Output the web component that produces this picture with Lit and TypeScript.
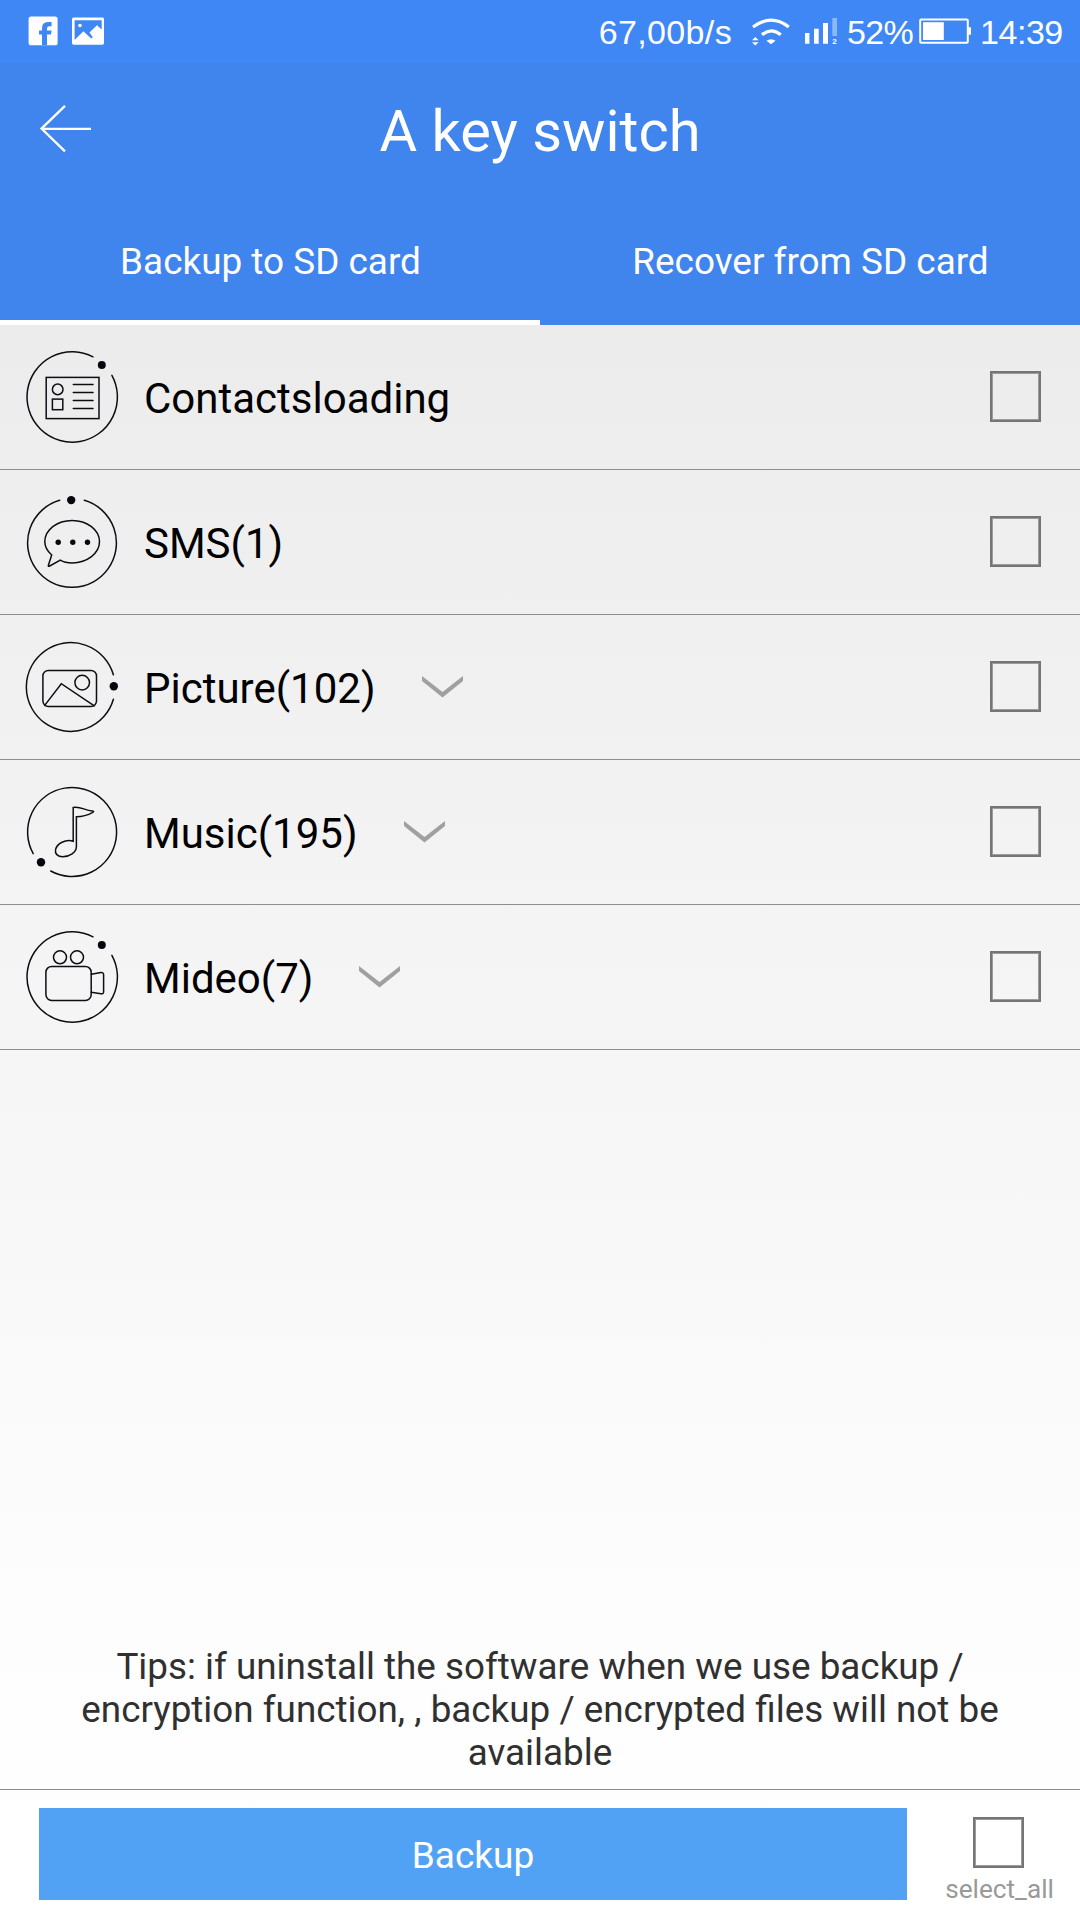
import { LitElement, html, svg, css, nothing, type SVGTemplateResult } from "lit";
import { customElement, property, state } from "lit/decorators.js";
import { classMap } from "lit/directives/class-map.js";

interface Category {
  id: string;
  label: string;
  expandable: boolean;
  icon: SVGTemplateResult;
}

const contactsIcon = svg`
  <path d="M93 31.8A45.2 45.2 0 1 0 111.9 50.3" />
  <circle class="dot" cx="101.8" cy="39.9" r="4" />
  <rect x="46.2" y="52.4" width="52.8" height="41.2" />
  <circle cx="57.7" cy="64.4" r="5.3" />
  <rect x="52.4" y="74.1" width="10.4" height="10.6" />
  <path d="M73.3 59.4H93M73.3 67.4H93M73.3 75.5H93M73.3 83.6H93" />`;

const smsIcon = svg`
  <path d="M59.6 30.3A44.4 44.4 0 1 0 84.4 30.3" />
  <circle class="dot" cx="71.2" cy="30.1" r="4.2" />
  <path d="M51.7 85C47.5 81.5 44.8 76.8 44.8 71.6C44.8 59.9 57 50.4 72.1 50.4S99.5 59.9 99.5 71.6S87.2 92.9 72.1 92.9C67.5 92.9 63.5 92 60.3 90.1L49.3 96.2Q48 96.6 48.4 95.2Z" />
  <circle class="dot" cx="58.2" cy="72.3" r="2.7" />
  <circle class="dot" cx="72.8" cy="72.3" r="2.7" />
  <circle class="dot" cx="87.5" cy="72.3" r="2.7" />`;

const pictureIcon = svg`
  <path d="M113.4 59.7A44.4 44.4 0 1 0 113.4 84.3" />
  <circle class="dot" cx="113.8" cy="71.3" r="4.2" />
  <rect x="42.9" y="55.4" width="53.6" height="36.2" rx="5.5" />
  <circle cx="82.2" cy="67.6" r="7.3" />
  <path d="M44.7 90.4L61.3 68.7L94.3 90.8" />`;

const musicIcon = svg`
  <path d="M50.7 111A44.5 44.5 0 1 0 33.2 93.6" />
  <circle class="dot" cx="41" cy="102.3" r="4.2" />
  <path d="M73.2 81.2V47.4C81 45.8 84.5 50.8 92.6 50.9Q94.6 51.2 92.8 52.3C88 55 82.5 56.7 76.4 56.7V86.5C76.4 92.5 69.5 96.7 62.8 96.7C57.5 96.7 54.6 93.6 55.6 89.4C57 83.6 65.5 78.8 73.2 81.2Z" />`;

const videoIcon = svg`
  <path d="M93 31.8A45.2 45.2 0 1 0 111.9 50.3" />
  <circle class="dot" cx="101.8" cy="39.9" r="4" />
  <circle cx="60" cy="52.3" r="6.5" />
  <circle cx="77" cy="52.3" r="6.5" />
  <rect x="45.9" y="61.4" width="45.3" height="34" rx="5.8" />
  <path d="M91.2 69.2L101 67.5Q103.6 67.4 103.6 69.6V86.8Q103.6 89.2 101 88.8L91.2 87.2" />`;

const categories: Category[] = [
  { id: "contacts", label: "Contactsloading", expandable: false, icon: contactsIcon },
  { id: "sms", label: "SMS(1)", expandable: false, icon: smsIcon },
  { id: "picture", label: "Picture(102)", expandable: true, icon: pictureIcon },
  { id: "music", label: "Music(195)", expandable: true, icon: musicIcon },
  { id: "video", label: "Mideo(7)", expandable: true, icon: videoIcon },
];

@customElement("check-box")
class CheckBox extends LitElement {
  static styles = css`
    :host {
      display: block;
      flex: none;
      width: 51px;
      height: 51px;
      box-sizing: border-box;
      border: 2px solid #757575;
      box-shadow: inset 0 0 0 1px #9c9c9c;
    }
  `;
  render() {
    return nothing;
  }
}

@customElement("status-bar")
class StatusBar extends LitElement {
  static styles = css`
    :host {
      display: flex;
      height: 63px;
      box-sizing: border-box;
      padding-right: 16px;
      background: #4087f6;
      color: #fff;
      font: 34px/63px "Liberation Sans", Arial, sans-serif;
    }
    svg {
      display: block;
      flex: none;
      fill: #fff;
    }
    .spacer {
      flex: 1;
    }
    .cut {
      fill: #4087f6;
    }
    .line {
      fill: none;
      stroke: #fff;
    }
    .text {
      padding-top: 1px;
      white-space: nowrap;
    }
    .rate {
      letter-spacing: 0.35px;
    }
    .percent {
      width: 67px;
      letter-spacing: -0.7px;
    }
    .clock {
      width: 84px;
      letter-spacing: -0.45px;
    }
    .sim {
      font: bold 8px "Liberation Sans", sans-serif;
    }
  `;
  render() {
    return html`
      <svg width="110" height="63" viewBox="0 0 110 63">
        <rect x="28.6" y="16.4" width="29" height="28.9" rx="2.6" />
        <path class="cut" d="M42 45.3V34.6H39V30.6H42V28.4Q42 22 48.2 22H51.6V26.2H49.4Q47 26.2 47 28.6V30.6H51.6L51 34.6H47V45.3Z" />
        <rect x="72" y="17.4" width="32" height="27.3" rx="1.6" />
        <path class="cut" d="M74.6 20.2H101.7V29.5L97 25.2L89.5 32.5L92.8 37.2L91.2 38.6L83.4 31.2L74.6 40Z" />
        <circle cx="80" cy="25.5" r="1.8" />
      </svg>
      <span class="spacer"></span>
      <span class="text rate">67,00b/s</span>
      <svg width="115" height="63" viewBox="732 0 115 63">
        <path class="line" stroke-width="3.2" d="M753 27Q771 13.4 788.8 27" />
        <path class="line" stroke-width="3.2" d="M762 34.8Q771.2 26.8 780.8 34.8" />
        <path d="M766.4 40.8Q771 37.6 775.6 40.8L771 44.3Z" />
        <path d="M752 40.2L755.3 37L758.6 40.2ZM752 42.2L755.3 45.6L758.6 42.2Z" />
        <path d="M805 33h4.4v10.7H805zM814 28.7h4.7v15H814zM823 23h5v20.7h-5z" />
        <path opacity=".4" d="M832.3 18h4.7v18h-4.7z" />
        <text class="sim" x="832.2" y="43.8">2</text>
      </svg>
      <span class="text percent">52%</span>
      <svg width="66" height="63" viewBox="914 0 66 63">
        <rect class="line" stroke-width="2" x="920.2" y="19.6" width="47.6" height="23.2" rx="1" />
        <rect x="923" y="22.2" width="20.8" height="17.8" />
        <rect x="968" y="27.3" width="3" height="7.4" />
      </svg>
      <span class="text clock">14:39</span>
    `;
  }
}

@customElement("category-row")
class CategoryRow extends LitElement {
  @property({ attribute: false }) category!: Category;

  static styles = css`
    :host {
      display: flex;
      align-items: center;
      height: 145px;
      box-sizing: border-box;
      padding-right: 39px;
      border-bottom: 1px solid #8e8e8e;
    }
    svg {
      display: block;
      flex: none;
    }
    .icon {
      fill: none;
      stroke: #0c0e14;
      stroke-width: 1.5;
      stroke-linecap: round;
    }
    .icon .dot {
      fill: #05070f;
      stroke: none;
    }
    .label {
      margin-left: 1px;
      padding-top: 3px;
      font-size: 42px;
      line-height: 50px;
      color: #000;
      white-space: nowrap;
    }
    .chevron {
      margin-left: 46px;
      fill: #a0a0a0;
    }
    .spacer {
      flex: 1;
    }
    check-box {
      margin-bottom: 1px;
    }
  `;
  render() {
    return html`
      <svg class="icon" width="143" height="144" viewBox="0 0 143 144">${this.category.icon}</svg>
      <span class="label">${this.category.label}</span>
      ${this.category.expandable
        ? html`<svg class="chevron" width="41" height="22" viewBox="0 0 41 22">
            <path d="M0 0L20.5 16L41 0V5L20.5 21.4L0 5Z" />
          </svg>`
        : nothing}
      <span class="spacer"></span>
      <check-box></check-box>
    `;
  }
}

@customElement("app-root")
class AppRoot extends LitElement {
  @state() private activeTab = 0;

  static styles = css`
    :host {
      display: flex;
      flex-direction: column;
      width: 1080px;
      height: 1920px;
      overflow: hidden;
      background: linear-gradient(#ececec 325px, #fdfdfd 1620px, #fff 1850px);
      font-family: Roboto, sans-serif;
    }
    .header {
      display: grid;
      grid-template-columns: 130px 1fr 130px;
      height: 137px;
      background: #4084ee;
      color: #fff;
    }
    .back {
      display: block;
      fill: none;
      stroke: #fff;
      stroke-width: 2.3;
    }
    .title {
      margin: 0;
      font-size: 57.8px;
      font-weight: 400;
      line-height: 137px;
      text-align: center;
      white-space: nowrap;
    }
    .tabs {
      display: flex;
      height: 125px;
      background: #4084ee;
      color: #fff;
    }
    .tab {
      flex: 1;
      box-sizing: border-box;
      border-bottom: 5px solid transparent;
      padding: 3px 0 0 1px;
      font-size: 36.9px;
      line-height: 117px;
      text-align: center;
    }
    .tab.active {
      border-bottom-color: #fff;
    }
    .spacer {
      flex: 1;
    }
    .tips {
      margin: 0 0 15px;
      padding: 0 60px;
      font-size: 36.85px;
      line-height: 43px;
      text-align: center;
      color: #303030;
    }
    .footer {
      display: flex;
      height: 131px;
      box-sizing: border-box;
      border-top: 1px solid #8a8a8a;
      padding: 18px 26px 0 39px;
    }
    .backup {
      flex: none;
      width: 868px;
      height: 92px;
      box-sizing: border-box;
      border: 0;
      padding: 3px 0 0;
      background: #51a2f4;
      color: #fff;
      font: 37px/89px Roboto, sans-serif;
      text-align: center;
    }
    .select-all {
      flex: none;
      width: 107px;
      display: flex;
      flex-direction: column;
      align-items: center;
      margin-left: 39px;
      padding-top: 9px;
      font-size: 26.2px;
      line-height: 32px;
      color: #999;
    }
    .select-all check-box {
      margin-right: 3px;
    }
    .select-all span {
      margin-top: 5px;
    }
  `;

  render() {
    const tabs = ["Backup to SD card", "Recover from SD card"];
    return html`
      <status-bar></status-bar>
      <div class="header">
        <svg class="back" width="130" height="137" viewBox="0 63 130 137">
          <path d="M65 105.8L41.5 128.6L65 151.4M41.5 128.8H91" />
        </svg>
        <h1 class="title">A key switch</h1>
      </div>
      <div class="tabs">
        ${tabs.map(
          (t, i) => html`<div
            class=${classMap({ tab: true, active: i === this.activeTab })}
            @click=${() => (this.activeTab = i)}
          >${t}</div>`
        )}
      </div>
      ${categories.map((c) => html`<category-row .category=${c}></category-row>`)}
      <span class="spacer"></span>
      <p class="tips">
        Tips: if uninstall the software when we use backup /<br />
        encryption function, , backup / encrypted files will not be<br />
        available
      </p>
      <div class="footer">
        <button class="backup">Backup</button>
        <div class="select-all">
          <check-box></check-box>
          <span>select_all</span>
        </div>
      </div>
    `;
  }
}
